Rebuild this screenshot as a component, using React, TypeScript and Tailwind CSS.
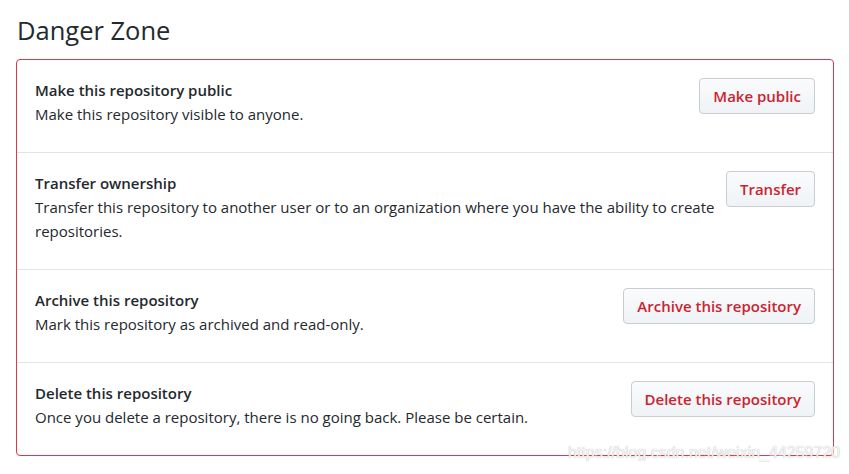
import React from "react";

const rows = [
  {
    title: "Make this repository public",
    desc: "Make this repository visible to anyone.",
    btn: "Make public",
  },
  {
    title: "Transfer ownership",
    desc: "Transfer this repository to another user or to an organization where you have the ability to create repositories.",
    btn: "Transfer",
  },
  {
    title: "Archive this repository",
    desc: "Mark this repository as archived and read-only.",
    btn: "Archive this repository",
  },
  {
    title: "Delete this repository",
    desc: "Once you delete a repository, there is no going back. Please be certain.",
    btn: "Delete this repository",
  },
];

export default function App() {
  return (
    <div
      className="relative w-[849px] h-[474px] bg-white overflow-hidden text-[#24292e]"
      style={{ fontFamily: '"Open Sans", "Noto Sans", sans-serif' }}
    >
      <div className="pl-4 pt-[12px]">
        <h2 className="text-[25.5px] leading-[36px] font-normal pl-[1px] mb-[11px]">Danger Zone</h2>
        <div className="w-[818px] border border-[#d73a49] rounded-[4px]">
          {rows.map((r, i) => (
            <div
              key={r.title}
              className={
                "flex items-start gap-2 pl-[18px] pr-[18px] pt-[18px] pb-[26px] " +
                (i < rows.length - 1 ? "border-b border-[#e1e4e8]" : "")
              }
            >
              <div className="flex-1 min-w-0 text-[15px] leading-[24px]">
                <div className="font-semibold">{r.title}</div>
                <div>{r.desc}</div>
              </div>
              <button className="shrink-0 h-[36px] px-[13px] rounded-[4px] border border-[#c9ccd0] bg-gradient-to-b from-[#fafbfc] to-[#eff3f6] text-[#cb2431] text-[15px] font-semibold leading-[22px]">
                {r.btn}
              </button>
            </div>
          ))}
        </div>
      </div>
      <div
        className="absolute left-[568px] top-[441px] text-[16px] leading-[24px] text-[#f6f6f6] pointer-events-none whitespace-nowrap"
        style={{ fontFamily: '"Liberation Sans", Arial, sans-serif', textShadow: "0 0 1px #a8a8a8" }}
      >
        https://blog.csdn.net/weixin_44259720
      </div>
    </div>
  );
}
